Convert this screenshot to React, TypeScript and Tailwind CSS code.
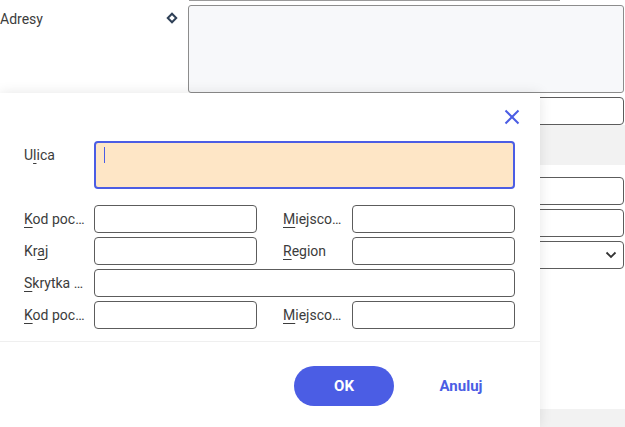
import React from "react";

const blue = "#4b5de4";

const Field = ({ className = "" }: { className?: string }) => (
  <div className={`h-[28px] rounded-[4px] border border-[#5c5c5c] bg-white ${className}`} />
);

const Label = ({
  k,
  rest,
  before = "",
  wide = "w-[70px]",
}: {
  k: string;
  rest: string;
  before?: string;
  wide?: string;
}) => (
  <div className={`${wide} shrink-0 whitespace-nowrap pr-[8px] text-[14px] leading-[20px] text-[#3c3c3c]`}>
    {before}
    <span className="underline underline-offset-[3px] decoration-[1px]">{k}</span>
    {rest}
  </div>
);

const DialogRow = ({
  left,
  right,
}: {
  left: React.ReactNode;
  right?: React.ReactNode;
}) => (
  <div className="flex items-center">
    {left}
    <Field className="w-[163px]" />
    {right && (
      <>
        <div className="w-[26px]" />
        {right}
        <Field className="w-[163px]" />
      </>
    )}
  </div>
);

export default function App() {
  return (
    <div
      className="relative w-[625px] h-[427px] overflow-hidden bg-white"
      style={{ fontFamily: "Roboto, 'Noto Sans', sans-serif" }}
    >
      {/* page behind the dialog */}
      <div className="ml-[189px] w-[371px] h-px bg-[#9a9a9a]" />
      <div className="flex mt-[4px]">
        <div className="w-[188px] shrink-0 flex items-start justify-between pt-[4px] pr-[10px]">
          <span className="text-[14px] leading-[20px] text-[#3c3c3c]">Adresy</span>
          <svg width="12" height="12" viewBox="0 0 12 12" className="mt-[3px]">
            <rect
              x="3"
              y="3"
              width="6"
              height="6"
              transform="rotate(45 6 6)"
              fill="none"
              stroke="#2f4157"
              strokeWidth="2"
            />
          </svg>
        </div>
        <div className="flex-1 mr-px h-[88px] rounded-[3px] border border-[#8c8c8c] bg-[#f7f8fa]" />
      </div>

      <div className="ml-[188px] mr-px flex flex-col">
        <Field className="mt-[4px]" />
        <div className="h-[40px] bg-[#f2f2f2] -mr-px" />
        <Field className="mt-[12px]" />
        <Field className="mt-[4px]" />
        <div className="mt-[4px] h-[28px] rounded-[4px] border border-[#5c5c5c] flex items-center justify-end pr-[6px]">
          <svg width="12" height="8" viewBox="0 0 12 8">
            <path d="M1.5 1.5 L6 6 L10.5 1.5" fill="none" stroke="#333" strokeWidth="1.8" />
          </svg>
        </div>
      </div>
      <div className="mt-[140px] h-[20px] bg-[#f2f2f2]" />

      {/* dialog */}
      <div className="absolute left-0 top-[93px] bottom-0 w-[540px] bg-white shadow-[0_0_12px_rgba(0,0,0,0.1)]">
        <div className="h-[48px] flex items-center justify-end pr-[20px]">
          <svg width="16" height="16" viewBox="0 0 16 16">
            <path d="M1.5 1.5 L14.5 14.5 M14.5 1.5 L1.5 14.5" stroke={blue} strokeWidth="2" />
          </svg>
        </div>

        <div className="px-[24px] flex flex-col">
          <div className="flex items-start">
            <div className="w-[70px] pt-[4px] text-[14px] leading-[20px] text-[#3c3c3c]">
              U<span className="underline underline-offset-[3px]">l</span>ica
            </div>
            <div className="w-[421px] h-[48px] rounded-[4px] border-2 border-[#4b5de4] bg-[#fee6c6] pl-[8px] pt-[4px]">
              <div className="w-px h-[16px] bg-[#4b5de4]" />
            </div>
          </div>

          <div className="mt-[16px] flex flex-col gap-[4px]">
            <DialogRow
              left={<Label k="K" rest="od poc…" />}
              right={<Label k="M" rest="iejsco…" wide="w-[69px]" />}
            />
            <DialogRow
              left={<Label before="Kr" k="a" rest="j" />}
              right={<Label k="R" rest="egion" wide="w-[69px]" />}
            />
            <div className="flex items-center">
              <Label k="S" rest="krytka …" />
              <Field className="w-[421px]" />
            </div>
            <DialogRow
              left={<Label k="K" rest="od poc…" />}
              right={<Label k="M" rest="iejsco…" wide="w-[69px]" />}
            />
          </div>
        </div>

        <div className="mt-[12px] border-t border-[#efefef]" />

        <div className="pt-[24px] pr-[29px] flex justify-end gap-[17px]">
          <button className="w-[100px] h-[40px] rounded-full bg-[#4b5de4] text-white text-[15px] font-bold">
            OK
          </button>
          <button className="w-[100px] h-[40px] text-[#4b5de4] text-[15px] font-bold">
            Anuluj
          </button>
        </div>
      </div>
    </div>
  );
}
